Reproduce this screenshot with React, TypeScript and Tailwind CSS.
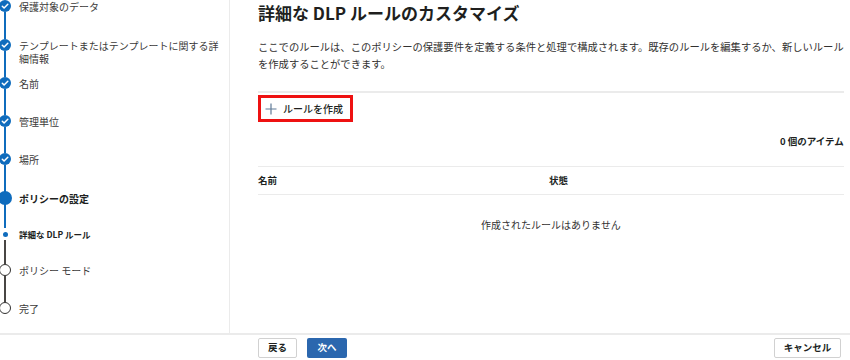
import React from "react";

type StepState = "done" | "current" | "sub" | "todo";

const steps: { label: React.ReactNode; state: StepState; h: string; line?: "blue" | "gray" }[] = [
  { label: "保護対象のデータ", state: "done", h: "h-[39px]", line: "blue" },
  {
    label: (
      <>
        テンプレートまたはテンプレートに関する詳
        <br />
        細情報
      </>
    ),
    state: "done",
    h: "h-[38px]",
    line: "blue",
  },
  { label: "名前", state: "done", h: "h-[38px]", line: "blue" },
  { label: "管理単位", state: "done", h: "h-[38px]", line: "blue" },
  { label: "場所", state: "done", h: "h-[39px]", line: "blue" },
  { label: "ポリシーの設定", state: "current", h: "h-[36px]", line: "blue" },
  { label: "詳細な DLP ルール", state: "sub", h: "h-[36px]", line: "gray" },
  { label: "ポリシー モード", state: "todo", h: "h-[38px]", line: "gray" },
  { label: "完了", state: "todo", h: "h-[31px]" },
];

const StepIcon = ({ state }: { state: StepState }) => {
  if (state === "done")
    return (
      <svg width="12" height="12" viewBox="0 0 12 12">
        <circle cx="6" cy="6" r="6" fill="#0f6cbd" />
        <path d="M3.3 6.2 5.1 8 8.8 4.2" fill="none" stroke="#fff" strokeWidth="1.5" strokeLinecap="round" strokeLinejoin="round" />
      </svg>
    );
  if (state === "current") return <div className="w-[14px] h-[14px] shrink-0 rounded-full bg-[#0f6cbd]" />;
  if (state === "sub") return <div className="w-[5px] h-[5px] rounded-full bg-[#0f6cbd]" />;
  return <div className="w-[12px] h-[12px] rounded-full border-[1.5px] border-[#323130] bg-white" />;
};

const Sidebar = () => (
  <aside className="w-[230px] shrink-0 border-r border-[#ebebeb]">
    {steps.map((s, i) => (
      <div key={i} className={`flex gap-[8px] ${s.h}`}>
        <div className="w-[12px] -ml-px flex flex-col items-center shrink-0">
          <div className="h-[12px] w-[12px] flex items-center justify-center">
            <StepIcon state={s.state} />
          </div>
          {s.line === "blue" && <div className="flex-1 w-[2px] bg-[#0f6cbd]" />}
          {s.line === "gray" && <div className="flex-1 w-[1.5px] bg-[#484644]" />}
        </div>
        <div
          className={
            s.state === "current"
              ? "text-[10px] leading-[13px] font-bold text-[#201f1e]"
              : s.state === "sub"
              ? "text-[8.5px] leading-[13px] font-bold text-[#201f1e]"
              : "text-[10px] leading-[13px] text-[#3b3a39]"
          }
        >
          {s.label}
        </div>
      </div>
    ))}
  </aside>
);

const Main = () => (
  <main className="flex-1 pl-[28px] pr-[7px] text-[#323130]">
    <h1 className="text-[17px] leading-[26px] font-bold text-[#201f1e]">詳細な DLP ルールのカスタマイズ</h1>
    <p className="mt-[12px] text-[10.3px] leading-[17px] whitespace-nowrap">
      ここでのルールは、このポリシーの保護要件を定義する条件と処理で構成されます。既存のルールを編集するか、新しいルール
      <br />
      を作成することができます。
    </p>
    <div className="mt-[19px] h-[2px] bg-[#ebebeb]" />
    <div className="mt-[2px] flex">
      <button className="flex items-center gap-[6px] h-[27px] w-[95px] border-[3px] border-[#ee1111] pl-[4px] text-[10px] font-medium text-[#201f1e]">
        <svg width="12" height="12" viewBox="0 0 12 12">
          <path d="M6 0.5v11M0.5 6h11" stroke="#5f7a97" strokeWidth="1.2" />
        </svg>
        ルールを作成
      </button>
    </div>
    <div className="h-[38px] flex items-center justify-end text-[9.5px] font-bold text-[#201f1e]">0 個のアイテム</div>
    <div className="mt-[6px] h-[1px] bg-[#ebebeb]" />
    <div className="h-[27px] flex items-center text-[9.5px] font-bold text-[#201f1e]">
      <div className="w-[291px]">名前</div>
      <div>状態</div>
    </div>
    <div className="h-[1px] bg-[#ebebeb]" />
    <div className="h-[59px] flex items-center justify-center text-[10px]">作成されたルールはありません</div>
  </main>
);

const Footer = () => (
  <footer className="h-[27px] border-t-2 border-[#ebebeb] flex items-center pl-[258px] pr-[9px] text-[9.5px] font-bold">
    <button className="h-[20px] w-[39px] rounded-[2px] border border-[#d1d1d1] bg-white text-[#201f1e]">戻る</button>
    <button className="ml-[10px] h-[20px] w-[40px] rounded-[2px] bg-[#2b67ae] text-white">次へ</button>
    <button className="ml-auto h-[20px] w-[67px] rounded-[2px] border border-[#d1d1d1] bg-white text-[#201f1e]">キャンセル</button>
  </footer>
);

export default function App() {
  return (
    <div
      className="w-[850px] h-[360px] bg-white flex flex-col overflow-hidden"
      style={{ fontFamily: '"Noto Sans CJK JP", "Noto Sans", sans-serif' }}
    >
      <div className="flex flex-1 min-h-0">
        <Sidebar />
        <Main />
      </div>
      <Footer />
    </div>
  );
}
